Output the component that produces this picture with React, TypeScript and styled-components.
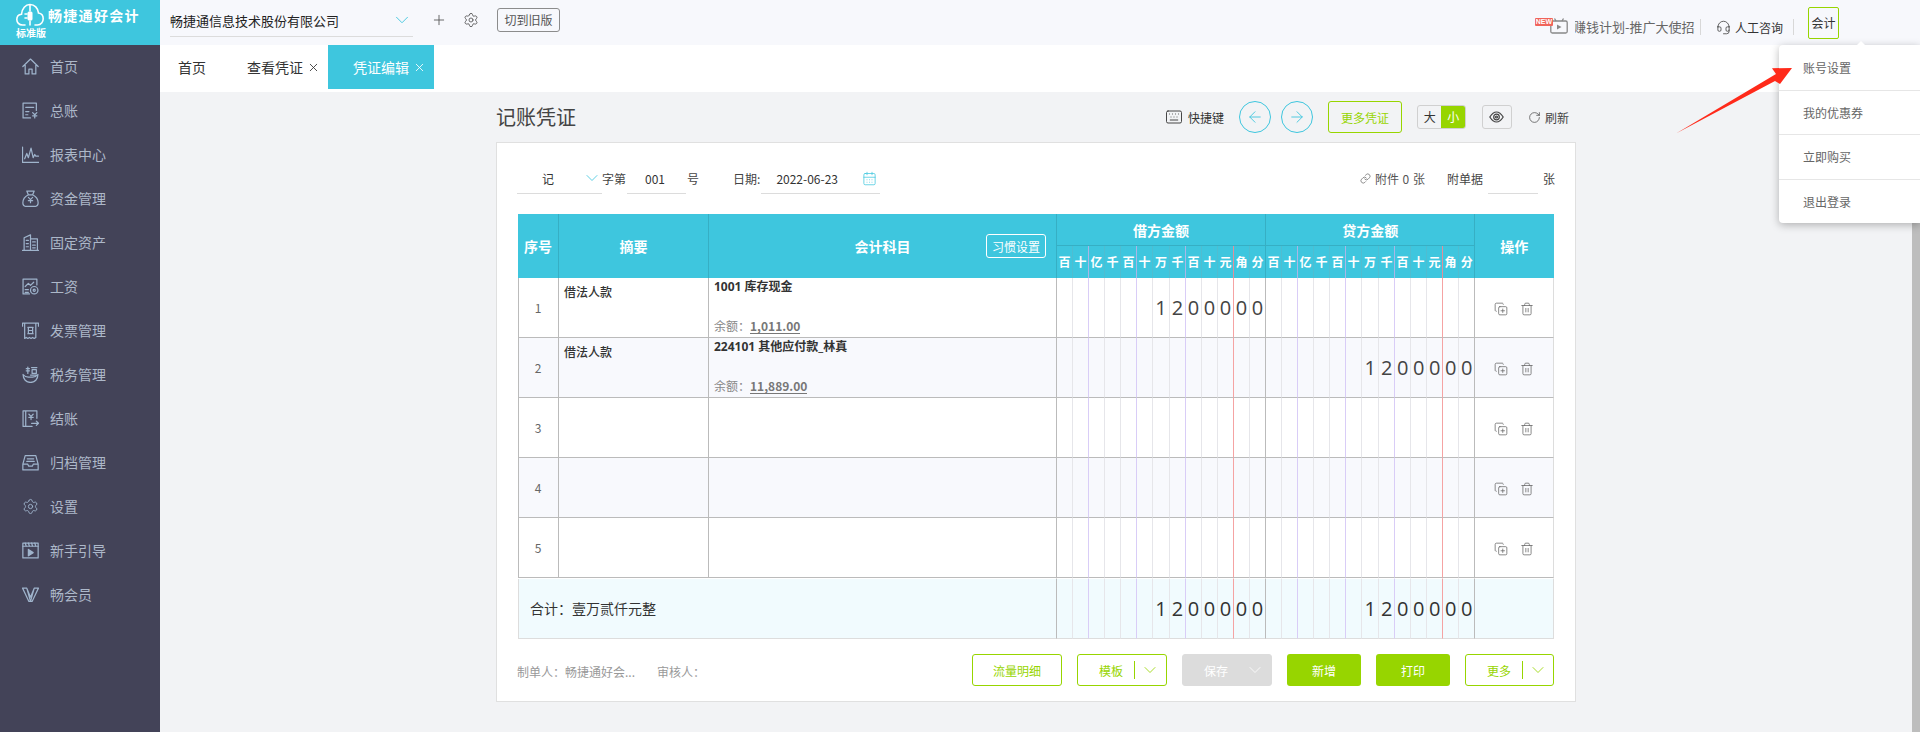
import React from "react";
import styled, { createGlobalStyle } from "styled-components";
import {
  ArrowLeft, ArrowRight, CalendarDays, ChevronDown, CopyPlus, Headset, Keyboard, Link as LinkIcon,
  Plus, RotateCw, Settings, Trash2, X,
} from "lucide-react";

const CYAN = "#3ec6de";
const GREEN = "#97d500";

const Global = createGlobalStyle`
  html, body { margin: 0; height: 100%; overflow: hidden; }
  body { font-family: "Noto Sans CJK SC", "Noto Sans", sans-serif; font-size: 12px; color: #333; }
  * { box-sizing: border-box; }
`;

const Page = styled.div`display: flex; width: 1920px; height: 732px; position: relative; overflow: hidden;`;

/* ---------- sidebar ---------- */
const Sidebar = styled.aside`width: 160px; flex: none; background: #434358; display: flex; flex-direction: column;`;
const Brand = styled.div`height: 45px; background: ${CYAN}; color: #fff; padding: 3px 0 0 16px; position: relative;`;
const BrandRow = styled.div`display: flex; align-items: center; gap: 4px; height: 24px;`;
const BrandName = styled.span`font-size: 14px; font-weight: 700; letter-spacing: 1.300px; line-height: 24px;`;
const Edition = styled.div`font-size: 10px; font-weight: 700; line-height: 12px;`;
const Menu = styled.nav`display: flex; flex-direction: column;`;
const MenuItem = styled.a`
  height: 44px; display: flex; align-items: center; padding: 0 0 2px 22px; gap: 11px;
  font-size: 14px; color: #adb8c9; line-height: 20px;
  svg { flex: none; color: #9fb4cc; }
`;

const Ico: React.FC<{ children: React.ReactNode }> = ({ children }) => (
  <svg width="17" height="17" viewBox="0 0 16 16" fill="none" stroke="currentColor" strokeWidth="1.150" strokeLinejoin="round" strokeLinecap="round">{children}</svg>
);
const yen = (x: number, y: number) => `M${x - 2} ${y}l2 2 2-2M${x} ${y + 2}v3M${x - 2} ${y + 3}h4`;

const menu: [string, React.ReactNode][] = [
  ["首页", <Ico><path d="M.8 8 8 1l7.200 7M3 6.500V15h3.500v-4.500h3V15H13V6.500" /></Ico>],
  ["总账", <Ico><path d="M13.500 8V1H1v14h7M3.500 5h7.500M3.500 9h3M3.500 12h2" /><path d={yen(12, 10)} /></Ico>],
  ["报表中心", <Ico><path d="M.5 1v14.500h15.500M2.500 12l2-5 1.500 4 2.500-9 2 9 1.500-3 1 1.500h2.500" /></Ico>],
  ["资金管理", <Ico><path d="M4.500 1h7L10 4.500H6zM6 4.500C3 6 .8 9 .8 12c0 2.200 1.500 3.500 3.500 3.500h7.400c2 0 3.500-1.300 3.500-3.500 0-3-2.200-6-5.200-7.500" /><path d={yen(8, 7)} /></Ico>],
  ["固定资产", <Ico><path d="M2 15.500V3.500L8 .8v14.700M8 4.500h6.500v11M.5 15.500h15M4 6h2M4 9h2M4 12h2M10 7.500h2.500M10 10.500h2.500M10 13h2.500" /></Ico>],
  ["工资", <Ico><path d="M14 6.500V1H1v14h6M3 8l3-3 2 2 3-3M3 11h3M3 13.500h3" /><circle cx="11.500" cy="11.500" r="3.500" /><circle cx="11.500" cy="11.500" r="1" /></Ico>],
  ["发票管理", <Ico><path d="M.5 4V1h15v3M2.500 1v14.500l1.500-1 1.500 1 1.500-1 1.500 1 1.500-1 1.500 1 1.500-1V1M5.500 5h5M5.500 11h5M6 5v6M10 5v6M6 8h4" /></Ico>],
  ["税务管理", <Ico><path d="M1 8c0 4.500 3 7.500 7 7.500s7-3 7-7.500M1 8c1.500 2 3 2.500 5 2.500h4c2 0 3.500-.5 5-2.500M4 2.500h3M5.500 1v6M4 4.500l3 0M9 1.500l5 0M9.500 3.500h4v3.500h-4zM8 8.500h7" /></Ico>],
  ["结账", <Ico><path d="M3.500 15.500H1V.8h2.500M3.500.8H14v7M3.500.8v14.700h6" /><path d={yen(8.500, 4)} /><path d="M9 12.500h6.500M13.500 10.500l2 2-2 2" /></Ico>],
  ["归档管理", <Ico><path d="M.8 9.500 3 1.500h10l2.200 8v5.500H.8zM.8 9.500h4.500l1 2h3.400l1-2h4.500M5 4.500h6M4.500 7h7" /></Ico>],
  ["设置", <Settings size={17} strokeWidth={1.300} />],
  ["新手引导", <Ico><rect x=".8" y="1" width="14.400" height="14" /><path d="M.8 4h14.400M3 1l1 3M6 1l1 3M9 1l1 3M12 1l1 3" /><path d="M6 7l4.500 3L6 13z" fill="currentColor" /></Ico>],
  ["畅会员", <Ico><path d="M.5 2h4L8 10.500 11.500 2h4L9.500 14.500h-3zM4.500 2 8 14.500M11.500 2 8 14.500" /></Ico>],
];

/* ---------- top bar ---------- */
const Main = styled.div`flex: 1; min-width: 0; display: flex; flex-direction: column;`;
const TopBar = styled.header`height: 45px; flex: none; background: #f7f8fc; display: flex; align-items: flex-start; padding: 0 81px 0 10px;`;
const Company = styled.div`
  width: 243px; height: 29px; margin-top: 8px; border-bottom: 1px solid #dcdcdc;
  display: flex; align-items: center; justify-content: space-between; font-size: 13px; color: #222; padding: 0 0 4px 0;
  svg { color: ${CYAN}; }
`;
const BarIcon = styled.span<{ $ml: number }>`display: flex; margin: 12px 0 0 ${p => p.$ml}px; color: #555;`;
const OldVersion = styled.button`
  width: 63px; height: 24px; margin: 8px 0 0 18px; padding: 0; background: transparent; font: inherit; font-size: 12px; line-height: 22px;
  color: #555; border: 1px solid #8c8c8c; border-radius: 3px;
`;
const TopRight = styled.div`margin-left: auto; display: flex; align-items: center; height: 45px; padding-top: 9px; align-self: flex-start;`;
const TvWrap = styled.span`display: flex; margin-top: -2px; color: #888; position: relative;`;
const NewBadge = styled.span`
  position: absolute; left: -15px; top: 0; width: 18px; height: 8px; background: #f0645a; color: #fff; font: 700 7px/8px "Liberation Sans", sans-serif;
  text-align: center; border-radius: 1px;
`;
const Marquee = styled.span`width: 120px; margin-left: 7px; overflow: hidden; white-space: nowrap; font-size: 13px; color: #666; line-height: 18px; text-indent: -2px;`;
const VLine = styled.span<{ $ml: number }>`width: 1px; height: 16px; background: #d8d8d8; margin-left: ${p => p.$ml}px;`;
const Consult = styled.span`display: flex; align-items: center; gap: 4px; margin-left: 15px; color: #333; font-size: 12px; svg { color: #444; }`;
const RoleButton = styled.button`
  width: 31px; height: 32px; margin: -9px 0 0 14px; padding: 0; font: inherit; font-size: 12px; color: #333; background: transparent;
  border: 1px solid ${GREEN}; border-radius: 2px;
`;

/* ---------- tabs ---------- */
const TabBar = styled.div`height: 47px; flex: none; background: #fff; display: flex; align-items: flex-start;`;
const Tab = styled.div<{ $active?: boolean; $home?: boolean }>`
  height: 44px; display: flex; align-items: center; gap: 4px; font-size: 14px;
  padding: ${p => (p.$home ? "0 22px 0 18px" : p.$active ? "0 8px 0 25px" : "0 8px 0 19px")};
  background: ${p => (p.$active ? CYAN : "#fff")}; color: ${p => (p.$active ? "#fff" : "#333")};
`;

/* ---------- workspace ---------- */
const Body = styled.div`flex: 1; display: flex; min-height: 0;`;
const Workspace = styled.main`flex: 1; background: #f2f3f5; display: flex; flex-direction: column; align-items: center;`;
const ScrollRail = styled.div`width: 8px; flex: none; background: #bdbdbd;`;
const Column = styled.div`width: 1080px;`;
const TitleRow = styled.div`height: 50px; display: flex; align-items: center; padding-right: 7px; font-size: 12px;`;
const Title = styled.h1`margin: 0 auto 0 0; font-size: 20px; font-weight: 400; color: #444; line-height: 28px;`;
const ShortcutText = styled.span`display: flex; align-items: center; gap: 5px; color: #333; svg { color: #333; }`;
const Round = styled.button<{ $ml: number }>`
  width: 32px; height: 32px; border-radius: 50%; border: 1px solid ${CYAN}; background: transparent; color: ${CYAN}; margin-left: ${p => p.$ml}px;
  display: flex; align-items: center; justify-content: center; padding: 0;
`;
const MoreVoucher = styled.button`
  width: 74px; height: 32px; margin-left: 15px; padding: 0; font: inherit; font-size: 12px; color: ${GREEN}; background: transparent;
  border: 1px solid ${GREEN}; border-radius: 3px;
`;
const SizeToggle = styled.div`width: 49px; height: 24px; margin-left: 15px; display: flex; border: 1px solid #d0d0d0; border-radius: 3px; overflow: hidden;`;
const SizeOpt = styled.span<{ $on?: boolean }>`
  flex: 1; text-align: center; line-height: 22px; font-size: 12px; background: ${p => (p.$on ? GREEN : "transparent")}; color: ${p => (p.$on ? "#fff" : "#333")};
`;
const EyeBtn = styled.button`
  width: 30px; height: 24px; margin-left: 16px; padding: 0; border: 1px solid #d0d0d0; border-radius: 3px; background: transparent; color: #444;
  display: flex; align-items: center; justify-content: center;
`;
const Refresh = styled.span`display: flex; align-items: center; gap: 4px; margin-left: 16px; color: #444;`;

const Card = styled.section`width: 1080px; height: 560px; background: #fff; border: 1px solid #e0e0e0; padding: 0 21px;`;
const FormRow = styled.div`display: flex; align-items: center; height: 31px; margin: 20px -1px 20px -1px; color: #444; font-size: 12px;`;
const Under = styled.div<{ $w: number; $pl: number; $ml?: number; $pr?: number }>`
  width: ${p => p.$w}px; height: 31px; padding-left: ${p => p.$pl}px; margin-left: ${p => p.$ml ?? 0}px; padding-right: ${p => p.$pr ?? 3}px;
  border-bottom: 1px solid #dcdcdc; display: flex; align-items: center; justify-content: space-between; color: #333; flex: none;
  svg { color: ${CYAN}; }
`;
const Gap = styled.span<{ $ml: number }>`margin-left: ${p => p.$ml}px; flex: none;`;
const Attach = styled.span`margin-left: auto; display: flex; align-items: center; gap: 4px; color: #555; word-spacing: 1px;`;

/* ---------- voucher table ---------- */
const Table = styled.table`border-collapse: separate; border-spacing: 0; table-layout: fixed; width: 1036px;`;
const HeadRow = styled.tr`height: 32px;`;
const Th = styled.th<{ $line?: string; $low?: boolean }>`
  background: ${CYAN}; color: #fff; font-size: 14px; font-weight: 700; padding: 0; position: relative; text-align: center;
  border-right: 1px solid ${p => p.$line ?? "#36afc4"};
  border-bottom: ${p => (p.$low ? "1px solid #36afc4" : "0")};
`;
const Unit = styled(Th)`font-size: 12px; line-height: 14px;`;
const HabitBtn = styled.button`
  position: absolute; right: 10px; top: 20px; width: 60px; height: 24px; padding: 0; font: inherit; font-size: 12px; font-weight: 400; color: #fff;
  background: transparent; border: 1px solid #fff; border-radius: 3px;
`;
const Tr = styled.tr<{ $even?: boolean }>`background: ${p => (p.$even ? "#f8f9fd" : "#fff")};`;
const Td = styled.td<{ $line?: string; $first?: boolean }>`
  height: 60px; padding: 0; vertical-align: top; position: relative; overflow: visible;
  border-right: 1px solid ${p => p.$line ?? "#bbb"}; border-bottom: 1px solid #bbb;
  ${p => (p.$first ? "box-shadow: inset 1px 0 0 #bbb;" : "")}
`;
const Seq = styled.div`height: 59px; display: flex; align-items: center; justify-content: center; color: #666; font-size: 12px;`;
const Summary = styled.div`padding: 5px 0 0 5px; line-height: 18px; font-weight: 500; color: #333; font-size: 12px;`;
const SubjectBox = styled.div`padding-left: 5px; color: #333;`;
const SubjectName = styled.div`font-family: "Noto Sans", "Noto Sans CJK SC", sans-serif; font-weight: 700; line-height: 18px; font-size: 12px;`;
const Balance = styled.div`margin-top: 21px; line-height: 18px; color: #888; font-size: 12px;`;
const Amount = styled.span`display: inline-block; font-weight: 700; color: #777; line-height: 14px; border-bottom: 1px solid #777;`;
const Digit = styled.div`height: 59px; display: flex; align-items: center; justify-content: center; font-size: 20px; line-height: 1; color: #444; font-family: "Open Sans", sans-serif;`;
const Ops = styled.div`height: 59px; display: flex; align-items: center; justify-content: center; gap: 12px; color: #666; padding-top: 2px;`;
const TotalTd = styled.td<{ $line?: string }>`
  height: 61px; padding: 0; background: #f1fbfe; border-top: 1px solid #fff; border-bottom: 1px solid #ddd; vertical-align: middle;
  border-right: 1px solid ${p => p.$line ?? "#bbb"};
`;
const TotalLabel = styled(TotalTd)`padding: 0 0 2px 12px; font-size: 14px; color: #333; box-shadow: inset 1px 0 0 #ddd;`;
const TotalDigit = styled.div`text-align: center; font-size: 20px; line-height: 1; color: #333; font-family: "Open Sans", sans-serif;`;

/* ---------- footer ---------- */
const Footer = styled.div`display: flex; align-items: center; gap: 15px; height: 32px; margin-top: 15px;`;
const Makers = styled.div`margin: 2px auto 0 -1px; display: flex; gap: 22px; color: #999; font-size: 12px;`;
const GreenOutline = styled.button<{ $w: number }>`
  width: ${p => p.$w}px; height: 32px; padding: 0; font: inherit; font-size: 12px; color: ${GREEN}; background: #fff; border: 1px solid ${GREEN}; border-radius: 3px;
`;
const Solid = styled.button<{ $w: number }>`
  width: ${p => p.$w}px; height: 32px; padding: 0; font: inherit; font-size: 12px; color: #fff; background: ${GREEN}; border: 0; border-radius: 3px;
`;
const Split = styled.button<{ $w: number; $off?: boolean }>`
  width: ${p => p.$w}px; height: 32px; padding: 0 0 0 21px; display: flex; align-items: center; font: inherit; font-size: 12px;
  color: ${p => (p.$off ? "#fff" : GREEN)}; background: ${p => (p.$off ? "#dcdcdc" : "#fff")};
  border: 1px solid ${p => (p.$off ? "#dcdcdc" : GREEN)}; border-radius: 3px;
`;
const SplitLine = styled.span<{ $off?: boolean }>`width: 1px; height: 18px; margin: 0 5px 0 11px; background: ${p => (p.$off ? "transparent" : GREEN)};`;

/* ---------- overlays ---------- */
const Dropdown = styled.div`
  position: absolute; right: 0; top: 45px; width: 141px; background: #fff; border-radius: 4px 0 0 4px; box-shadow: 0 2px 8px rgba(0, 0, 0, .28); z-index: 5;
  &::before { content: ""; position: absolute; right: 55px; top: -4px; border: 4px solid transparent; border-top: 0; border-bottom-color: #fff; }
`;
const DropItem = styled.div`height: 44.500px; display: flex; align-items: center; padding-left: 24px; font-size: 12px; color: #666; & + & { border-top: 1px solid #e6e6e6; }`;
const Arrow = styled.svg`position: absolute; left: 1676px; top: 66px; z-index: 6;`;

const colWidths = [41, 150, 348];
const money = [16, 16, 16, 16, 16, 16, 17, 16, 16, 16, 16, 16, 16];
const units = ["百", "十", "亿", "千", "百", "十", "万", "千", "百", "十", "元", "角", "分"];
const amount = ["", "", "", "", "", "", "1", "2", "0", "0", "0", "0", "0"];
const blank = units.map(() => "");

const bodyLine = (i: number) => (i === 12 ? "#bbb" : i === 10 ? "#f5a3a3" : i === 1 || i === 4 || i === 7 ? "#d9cdf7" : "#e6e6ea");
const headLine = (i: number) => (i === 12 ? "#36afc4" : i === 10 ? "#e08f9c" : i === 1 || i === 4 || i === 7 ? "#aab6e6" : "#4fbdd1");

const rows = [
  { no: 1, summary: "借法人款", subject: "1001 库存现金", balance: "1,011.00", debit: amount, credit: blank },
  { no: 2, summary: "借法人款", subject: "224101 其他应付款_林真", balance: "11,889.00", debit: blank, credit: amount },
  { no: 3, debit: blank, credit: blank },
  { no: 4, debit: blank, credit: blank },
  { no: 5, debit: blank, credit: blank },
] as { no: number; summary?: string; subject?: string; balance?: string; debit: string[]; credit: string[] }[];

export default function App() {
  return (
    <Page>
      <Global />
      <Sidebar>
        <Brand>
          <BrandRow>
            <svg width="28" height="24" viewBox="0 0 28 24" fill="none" stroke="#fff" strokeWidth="1.600" strokeLinecap="round">
              <path d="M9 22H6.500C3 22 .8 19.500.8 16.500c0-3 2.200-5 4.700-5.300C6 5.500 9.500 1.500 14 1.500s8 3.500 8.500 8.500c2.800.3 4.700 2.700 4.700 5.800 0 3.200-2.200 6.200-5.700 6.200H19" />
              <path d="M14 2v6M14 18v4M11 11H9M11 15H9" strokeWidth="1.600" />
              <rect x="11.500" y="8.500" width="5" height="9" rx="1.500" fill="#fff" stroke="none" />
            </svg>
            <BrandName>畅捷通好会计</BrandName>
          </BrandRow>
          <Edition>标准版</Edition>
        </Brand>
        <Menu>
          {menu.map(([label, icon]) => (
            <MenuItem key={label}>{icon}<span>{label}</span></MenuItem>
          ))}
        </Menu>
      </Sidebar>

      <Main>
        <TopBar>
          <Company>畅捷通信息技术股份有限公司<ChevronDown size={22} strokeWidth={1} /></Company>
          <BarIcon $ml={18}><Plus size={16} strokeWidth={1.300} /></BarIcon>
          <BarIcon $ml={16}><Settings size={16} strokeWidth={1.300} /></BarIcon>
          <OldVersion>切到旧版</OldVersion>
          <TopRight>
            <TvWrap>
              <NewBadge>NEW</NewBadge>
              <svg width="18" height="16" viewBox="0 0 18 16" fill="none" stroke="currentColor" strokeWidth="1.300">
                <rect x=".8" y="3" width="16.400" height="12" rx="1.500" />
                <path d="M6 3 4.500.5M12 3l1.500-2.500" />
                <path d="M7 6.500 11.500 9 7 11.500z" fill="currentColor" stroke="none" />
              </svg>
            </TvWrap>
            <Marquee>赚钱计划-推广大使招募</Marquee>
            <VLine $ml={5} />
            <Consult><Headset size={15} strokeWidth={1.300} />人工咨询</Consult>
            <VLine $ml={10} />
            <RoleButton>会计</RoleButton>
          </TopRight>
        </TopBar>

        <TabBar>
          <Tab $home>首页</Tab>
          <Tab>查看凭证<X size={13} strokeWidth={1.600} /></Tab>
          <Tab $active>凭证编辑<X size={13} strokeWidth={1.600} /></Tab>
        </TabBar>

        <Body>
          <Workspace>
            <Column>
              <TitleRow>
                <Title>记账凭证</Title>
                <ShortcutText><Keyboard size={18} strokeWidth={1.200} />快捷键</ShortcutText>
                <Round $ml={15}><ArrowLeft size={18} strokeWidth={1.200} /></Round>
                <Round $ml={10}><ArrowRight size={18} strokeWidth={1.200} /></Round>
                <MoreVoucher>更多凭证</MoreVoucher>
                <SizeToggle><SizeOpt>大</SizeOpt><SizeOpt $on>小</SizeOpt></SizeToggle>
                <EyeBtn>
                  <svg width="15" height="12" viewBox="0 0 15 12" fill="none" stroke="currentColor" strokeWidth="1.200">
                    <path d="M.8 6C3 2.500 5 1 7.500 1s4.500 1.500 6.700 5c-2.200 3.500-4.200 5-6.700 5S3 9.500.8 6z" />
                    <circle cx="7.500" cy="6" r="2.800" />
                    <circle cx="7.500" cy="6" r="1" />
                  </svg>
                </EyeBtn>
                <Refresh><RotateCw size={13} strokeWidth={1.300} />刷新</Refresh>
              </TitleRow>

              <Card>
                <FormRow>
                  <Under $w={85} $pl={25} $pr={0}>记<ChevronDown size={20} strokeWidth={1} /></Under>
                  <span>字第</span>
                  <Under $w={59} $pl={18} $ml={1}>001</Under>
                  <Gap $ml={1}>号</Gap>
                  <Gap $ml={34}>日期:</Gap>
                  <Under $w={119} $pl={15} $ml={1}>2022-06-23<CalendarDays size={15} strokeWidth={1.200} /></Under>
                  <Attach><LinkIcon size={11} strokeWidth={1.400} />附件 0 张</Attach>
                  <Gap $ml={22}>附单据</Gap>
                  <Under $w={50} $pl={0} $ml={5} />
                  <Gap $ml={5}>张</Gap>
                </FormRow>

                <Table>
                  <colgroup>
                    {colWidths.map((w, i) => <col key={i} style={{ width: w }} />)}
                    {[...money, ...money].map((w, i) => <col key={`m${i}`} style={{ width: w }} />)}
                    <col style={{ width: 79 }} />
                  </colgroup>
                  <thead>
                    <HeadRow>
                      <Th rowSpan={2}>序号</Th>
                      <Th rowSpan={2}>摘要</Th>
                      <Th rowSpan={2}>会计科目<HabitBtn>习惯设置</HabitBtn></Th>
                      <Th colSpan={13} $low>借方金额</Th>
                      <Th colSpan={13} $low>贷方金额</Th>
                      <Th rowSpan={2} $line={CYAN}>操作</Th>
                    </HeadRow>
                    <HeadRow>
                      {[...units, ...units].map((u, i) => (
                        <Unit key={i} $line={headLine(i % 13)}>{u}</Unit>
                      ))}
                    </HeadRow>
                  </thead>
                  <tbody>
                    {rows.map(r => (
                      <Tr key={r.no} $even={r.no % 2 === 0}>
                        <Td $first><Seq>{r.no}</Seq></Td>
                        <Td>{r.summary && <Summary>{r.summary}</Summary>}</Td>
                        <Td>
                          {r.subject && (
                            <SubjectBox>
                              <SubjectName>{r.subject}</SubjectName>
                              <Balance>余额：<Amount>{r.balance}</Amount></Balance>
                            </SubjectBox>
                          )}
                        </Td>
                        {[...r.debit, ...r.credit].map((d, i) => (
                          <Td key={i} $line={bodyLine(i % 13)}><Digit>{d}</Digit></Td>
                        ))}
                        <Td $line="#ddd">
                          <Ops>
                            <CopyPlus size={14} strokeWidth={1.300} />
                            <Trash2 size={14} strokeWidth={1.300} />
                          </Ops>
                        </Td>
                      </Tr>
                    ))}
                    <tr>
                      <TotalLabel colSpan={3}>合计：壹万贰仟元整</TotalLabel>
                      {[...amount, ...amount].map((d, i) => (
                        <TotalTd key={i} $line={bodyLine(i % 13)}><TotalDigit>{d}</TotalDigit></TotalTd>
                      ))}
                      <TotalTd $line="#ddd" />
                    </tr>
                  </tbody>
                </Table>

                <Footer>
                  <Makers><span>制单人：畅捷通好会...</span><span>审核人：</span></Makers>
                  <GreenOutline $w={90}>流量明细</GreenOutline>
                  <Split $w={90}>模板<SplitLine /><ChevronDown size={20} strokeWidth={1} /></Split>
                  <Split $w={90} $off>保存<SplitLine $off /><ChevronDown size={20} strokeWidth={1} /></Split>
                  <Solid $w={74}>新增</Solid>
                  <Solid $w={74}>打印</Solid>
                  <Split $w={89}>更多<SplitLine /><ChevronDown size={20} strokeWidth={1} /></Split>
                </Footer>
              </Card>
            </Column>
          </Workspace>
          <ScrollRail />
        </Body>
      </Main>

      <Dropdown>
        <DropItem>账号设置</DropItem>
        <DropItem>我的优惠券</DropItem>
        <DropItem>立即购买</DropItem>
        <DropItem>退出登录</DropItem>
      </Dropdown>
      <Arrow width="118" height="70" viewBox="0 0 118 70">
        <polygon points="0,67.500 100,8 96,2.200 116,2 104,18 99,15" fill="#ff2a1a" />
      </Arrow>
    </Page>
  );
}
